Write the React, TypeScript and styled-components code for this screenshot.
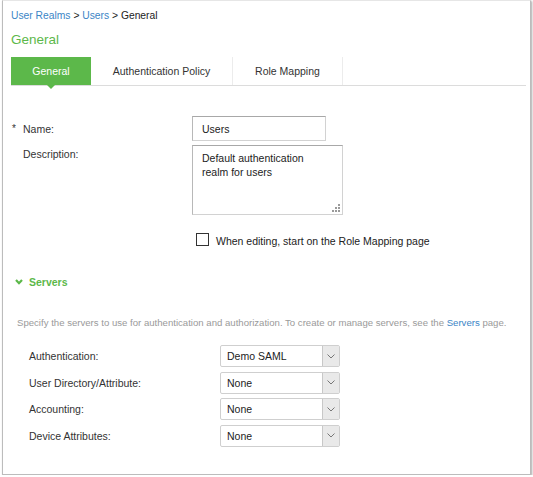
import React from 'react';
import styled, { createGlobalStyle } from 'styled-components';

const GlobalStyle = createGlobalStyle`
  html, body {
    margin: 0;
    padding: 0;
    background: #fff;
  }
  body {
    font-family: "Liberation Sans", Arial, sans-serif;
    color: #333;
  }
`;

const Frame = styled.div`
  box-sizing: border-box;
  margin-left: 2px;
  width: 529px;
  height: 475px;
  border: 1px solid #bcbcbc;
  border-top-color: #e6e6e6;
  box-shadow: 1px 1px 2px rgba(0, 0, 0, 0.35);
  padding: 8px 4px 0 8px;
  background: #fff;
`;

const Breadcrumb = styled.div`
  font-size: 10.3px;
  line-height: 14px;
  color: #222;
`;

const Crumb = styled.a`
  color: #3b85c6;
  text-decoration: none;
`;

const Heading = styled.h1`
  margin: 8px 0 0;
  font-size: 13.5px;
  line-height: 18px;
  font-weight: normal;
  color: #5cb84a;
`;

const TabBar = styled.div`
  display: flex;
  margin-top: 8px;
  height: 28px;
  border-bottom: 1px solid #dcdcdc;
`;

const Tab = styled.div<{ $active?: boolean; $width: number }>`
  position: relative;
  box-sizing: border-box;
  width: ${(p) => p.$width}px;
  display: flex;
  align-items: center;
  justify-content: center;
  font-size: 10.5px;
  color: ${(p) => (p.$active ? '#fff' : '#333')};
  background: ${(p) => (p.$active ? '#5cb84a' : '#fff')};
  border-right: ${(p) => (p.$active ? 'none' : '1px solid #ececec')};

  ${(p) =>
    p.$active &&
    `
    &::after {
      content: '';
      position: absolute;
      left: 50%;
      bottom: -4px;
      margin-left: -4px;
      border-left: 4px solid transparent;
      border-right: 4px solid transparent;
      border-top: 4px solid #5cb84a;
    }
  `}
`;

const Form = styled.div`
  display: grid;
  grid-template-columns: 181px auto;
  row-gap: 4px;
  margin-top: 30px;
`;

const Label = styled.div<{ $top?: boolean }>`
  position: relative;
  padding-left: 12px;
  font-size: 10.5px;
  display: flex;
  align-items: ${(p) => (p.$top ? 'flex-start' : 'center')};
  padding-top: ${(p) => (p.$top ? '3px' : '0')};
`;

const Required = styled.span`
  position: absolute;
  left: 1px;
  font-size: 10px;
`;

const TextInput = styled.div`
  box-sizing: border-box;
  width: 134px;
  height: 25px;
  border: 1px solid #d2d2d2;
  border-top-color: #a8a8a8;
  border-left-color: #b8b8b8;
  padding: 0 9px;
  display: flex;
  align-items: center;
  font-size: 10.5px;
  color: #222;
`;

const TextArea = styled.div`
  position: relative;
  box-sizing: border-box;
  width: 151px;
  height: 70px;
  border: 1px solid #d2d2d2;
  border-top-color: #a8a8a8;
  border-left-color: #b8b8b8;
  padding: 5px 9px;
  font-size: 10.5px;
  line-height: 14px;
  color: #222;
`;

const Grip = styled.svg`
  position: absolute;
  right: 2px;
  bottom: 2px;
`;

const CheckRow = styled.label`
  display: flex;
  align-items: center;
  gap: 7px;
  margin: 20px 0 0 185px;
  font-size: 10.5px;
  color: #222;
`;

const CheckBox = styled.span`
  box-sizing: border-box;
  width: 13px;
  height: 13px;
  border: 1px solid #333;
  margin-top: -4px;
`;

const SectionHeader = styled.div`
  display: flex;
  align-items: center;
  gap: 6px;
  margin: 29px 0 0 4px;
  font-size: 10.5px;
  font-weight: bold;
  color: #5cb84a;
`;

const Help = styled.p`
  margin: 29px 0 0 6px;
  font-size: 9.6px;
  color: #9a9a9a;
  white-space: nowrap;
`;

const HelpLink = styled.a`
  color: #3b85c6;
  text-decoration: none;
`;

const ServerGrid = styled.div`
  display: grid;
  grid-template-columns: 209px auto;
  row-gap: 4.5px;
  margin-top: 17px;
`;

const ServerLabel = styled.div`
  padding-left: 18px;
  font-size: 10.5px;
  display: flex;
  align-items: center;
`;

const Select = styled.div`
  box-sizing: border-box;
  width: 120px;
  height: 22px;
  display: flex;
  border: 1px solid #cfcfcf;
  border-radius: 2px;
  font-size: 10.5px;
  color: #222;
`;

const SelectValue = styled.div`
  flex: 1;
  display: flex;
  align-items: center;
  padding-left: 6px;
`;

const SelectArrow = styled.div`
  width: 16px;
  display: flex;
  align-items: center;
  justify-content: center;
  background: #e9e9e9;
  border-left: 1px solid #c8c8c8;
`;

const Chevron = () => (
  <svg width="8" height="5" viewBox="0 0 8 5">
    <path d="M0.5 0.5 L4 4 L7.5 0.5" fill="none" stroke="#777" strokeWidth="1" />
  </svg>
);

const servers = [
  { label: 'Authentication:', value: 'Demo SAML' },
  { label: 'User Directory/Attribute:', value: 'None' },
  { label: 'Accounting:', value: 'None' },
  { label: 'Device Attributes:', value: 'None' },
];

const App: React.FC = () => {
  return (
    <>
      <GlobalStyle />
      <Frame>
        <Breadcrumb>
          <Crumb href="#">User Realms</Crumb> &gt; <Crumb href="#">Users</Crumb> &gt; General
        </Breadcrumb>
        <Heading>General</Heading>

        <TabBar>
          <Tab $active $width={80}>General</Tab>
          <Tab $width={142}>Authentication Policy</Tab>
          <Tab $width={110}>Role Mapping</Tab>
        </TabBar>

        <Form>
          <Label>
            <Required>*</Required>
            Name:
          </Label>
          <TextInput>Users</TextInput>
          <Label $top>Description:</Label>
          <TextArea>
            Default authentication
            <br />
            realm for users
            <Grip width="8" height="8" viewBox="0 0 8 8">
              <g fill="#9a9a9a">
                <rect x="6" y="0" width="2" height="2" />
                <rect x="3" y="3" width="2" height="2" />
                <rect x="6" y="3" width="2" height="2" />
                <rect x="0" y="6" width="2" height="2" />
                <rect x="3" y="6" width="2" height="2" />
                <rect x="6" y="6" width="2" height="2" />
              </g>
            </Grip>
          </TextArea>
        </Form>

        <CheckRow>
          <CheckBox />
          When editing, start on the Role Mapping page
        </CheckRow>

        <SectionHeader>
          <svg width="8" height="6" viewBox="0 0 8 6">
            <path d="M1 1 L4 4.2 L7 1" fill="none" stroke="#5cb84a" strokeWidth="2.2" />
          </svg>
          Servers
        </SectionHeader>

        <Help>
          Specify the servers to use for authentication and authorization. To create or manage servers, see the{' '}
          <HelpLink href="#">Servers</HelpLink> page.
        </Help>

        <ServerGrid>
          {servers.map((s) => (
            <React.Fragment key={s.label}>
              <ServerLabel>{s.label}</ServerLabel>
              <Select>
                <SelectValue>{s.value}</SelectValue>
                <SelectArrow>
                  <Chevron />
                </SelectArrow>
              </Select>
            </React.Fragment>
          ))}
        </ServerGrid>
      </Frame>
    </>
  );
};

export default App;
